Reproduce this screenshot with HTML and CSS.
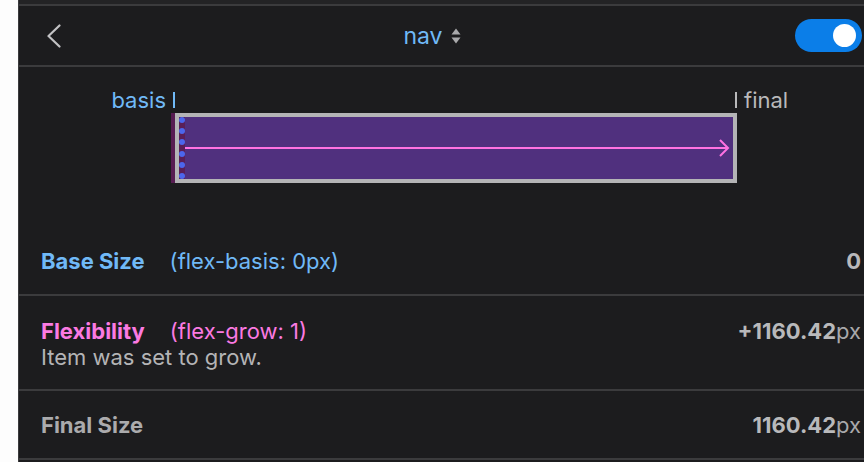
FILE: index.html
```html
<!DOCTYPE html>
<html>
<head>
<meta charset="utf-8">
<link rel="stylesheet" href="styles.css">
</head>
<body>
<div class="panel">
  <div class="top-strip"></div>
  <header class="header">
    <button class="back" aria-label="Back">
      <svg width="14" height="24" viewBox="0 0 14 24"><polyline points="12.5,1.5 1.5,12 12.5,22.5" fill="none" stroke="#c2c2c4" stroke-width="2.2" stroke-linecap="round" stroke-linejoin="round"/></svg>
    </button>
    <div class="title">
      <span class="title-text">nav</span>
      <svg class="updown" width="10" height="16" viewBox="0 0 10 16"><polygon points="0.5,6.5 5,0.5 9.5,6.5" fill="#a9a9ab"/><polygon points="0.5,9.5 5,15.5 9.5,9.5" fill="#a9a9ab"/></svg>
    </div>
    <div class="toggle"><div class="knob"></div></div>
  </header>

  <section class="diagram">
    <div class="scale">
      <div class="basis-label"><span>basis</span><i class="bar bar-blue"></i></div>
      <div class="scale-gap"></div>
      <div class="final-label"><i class="bar bar-gray"></i><span>final</span></div>
    </div>
    <div class="box-row">
      <div class="strip"></div>
      <div class="box">
        <div class="dots">
          <i></i><i></i><i></i><i></i><i></i><i></i>
        </div>
        <svg class="arrow" width="548" height="62" viewBox="0 0 548 62">
          <line x1="0" y1="31" x2="543" y2="31" stroke="#ff72e2" stroke-width="2"/>
          <polyline points="535,23 543,31 535,39" fill="none" stroke="#ff72e2" stroke-width="2"/>
        </svg>
      </div>
    </div>
  </section>

  <div class="row row-base">
    <div class="lbl"><b class="blue">Base Size</b><span class="code blue">(flex-basis: 0px)</span></div>
    <div class="val"><b>0</b></div>
  </div>
  <div class="row row-flex">
    <div class="lbl-wrap">
      <div class="lbl"><b class="pink">Flexibility</b><span class="code pink">(flex-grow: 1)</span></div>
      <div class="note">Item was set to grow.</div>
    </div>
    <div class="val"><b>+1160.42</b><span class="unit">px</span></div>
  </div>
  <div class="row row-final">
    <div class="lbl"><b class="gray">Final Size</b></div>
    <div class="val"><b>1160.42</b><span class="unit">px</span></div>
  </div>
  <div class="bottom-strip"></div>
</div>
</body>
</html>
```

FILE: styles.css
```css
html, body {
  margin: 0;
  padding: 0;
  background: #fdfdfd;
  height: 100%;
  overflow: hidden;
}
body {
  font-family: Inter, "Noto Sans", sans-serif;
  font-size: 22px;
}
.panel {
  margin-left: 18px;
  border-left: 1px solid #3b3b3d;
  background: #1c1c1e;
  height: 462px;
  display: flex;
  flex-direction: column;
}
.top-strip {
  height: 4px;
  background: #232325;
  border-bottom: 2px solid #3b3b3d;
}
.header {
  height: 59px;
  border-bottom: 2px solid #3b3b3d;
  display: flex;
  align-items: center;
  justify-content: space-between;
  padding: 0 2px 0 28px;
}
.back {
  width: 22px;
  height: 24px;
  padding: 0;
  border: 0;
  background: none;
  display: flex;
  align-items: center;
}
.title {
  display: flex;
  align-items: center;
  gap: 8px;
}
.title-text {
  color: #70b9f7;
  font-size: 23px;
  line-height: 28px;
}
.toggle {
  width: 67px;
  height: 33px;
  border-radius: 17px;
  background: #0b7ee8;
  display: flex;
  align-items: center;
  justify-content: flex-end;
  padding-right: 6px;
  box-sizing: border-box;
}
.knob {
  width: 23px;
  height: 23px;
  border-radius: 50%;
  background: #ffffff;
}
.diagram {
  height: 160px;
  padding-top: 21px;
  box-sizing: border-box;
}
.scale {
  display: flex;
  align-items: center;
  height: 24px;
}
.basis-label {
  width: 156px;
  display: flex;
  justify-content: flex-end;
  align-items: center;
  gap: 7px;
  color: #70b9f7;
}
.final-label {
  display: flex;
  align-items: center;
  gap: 7px;
  color: #b9b9bb;
}
.scale-gap {
  width: 560px;
}
.bar {
  display: block;
  width: 2px;
  height: 16px;
}
.bar-blue { background: #70b9f7; }
.bar-gray { background: #b9b9bb; }
.box-row {
  display: flex;
  margin-top: 1px;
  margin-left: 152px;
  height: 70px;
}
.strip {
  width: 4px;
  background: #571c52;
}
.box {
  width: 562px;
  box-sizing: border-box;
  border: 4px solid #b4b4b6;
  background: #50307e;
  display: flex;
}
.dots {
  width: 6px;
  background: #5a1f58;
  display: flex;
  flex-direction: column;
  justify-content: space-between;
  align-items: center;
}
.dots i {
  display: block;
  width: 6px;
  height: 6px;
  border-radius: 50%;
  background: #4c66ec;
}
.arrow {
  display: block;
}
.row {
  display: flex;
  justify-content: space-between;
  padding: 0 3px 0 22px;
  border-bottom: 2px solid #3b3b3d;
  line-height: 26px;
}
.row-base, .row-final {
  height: 67px;
  align-items: center;
}
.row-flex {
  height: 95px;
  padding-top: 22px;
  box-sizing: border-box;
  align-items: flex-start;
}
.lbl b {
  font-weight: 700;
}
.code {
  margin-left: 25px;
}
.blue { color: #70b9f7; }
.pink { color: #fb7ae2; }
.gray { color: #ababad; }
.note {
  color: #b4b4b6;
}
.val {
  color: #b9b9bb;
}
.val b {
  font-weight: 700;
}
.unit {
  color: #a9a9ab;
}
.bottom-strip {
  flex: 1;
}
```
